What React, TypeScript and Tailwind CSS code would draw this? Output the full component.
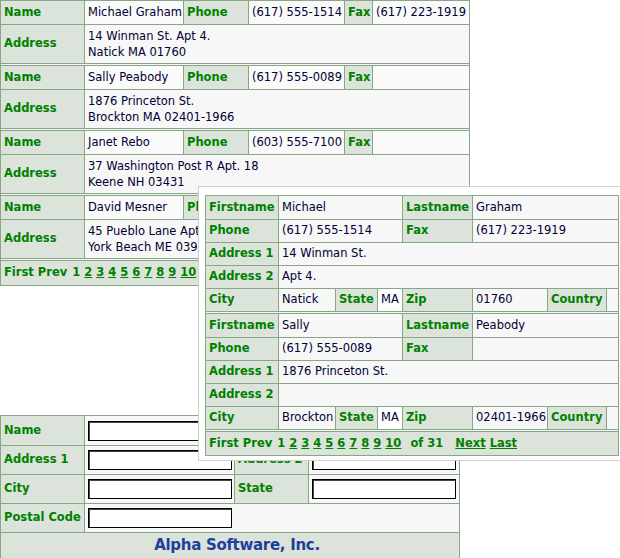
const LBL = 'border border-[#86a886] bg-[#dbe3da] px-[3px] font-bold text-[#008000] whitespace-nowrap';
const VAL = 'border border-[#86a886] bg-[#f7f7f7] px-[3px] text-[#000033] whitespace-nowrap';

const PEOPLE = [
  { name: 'Michael Graham', phone: '(617) 555-1514', fax: '(617) 223-1919', a1: '14 Winman St. Apt 4.', a2: 'Natick MA 01760' },
  { name: 'Sally Peabody', phone: '(617) 555-0089', fax: '', a1: '1876 Princeton St.', a2: 'Brockton MA 02401-1966' },
  { name: 'Janet Rebo', phone: '(603) 555-7100', fax: '', a1: '37 Washington Post R Apt. 18', a2: 'Keene NH 03431' },
  { name: 'David Mesner', phone: '(207) 555-3321', fax: '', a1: '45 Pueblo Lane Apt. 2', a2: 'York Beach ME 03910' },
];

const DETAIL = [
  { first: 'Michael', last: 'Graham', phone: '(617) 555-1514', fax: '(617) 223-1919', a1: '14 Winman St.', a2: 'Apt 4.', city: 'Natick', state: 'MA', zip: '01760' },
  { first: 'Sally', last: 'Peabody', phone: '(617) 555-0089', fax: '', a1: '1876 Princeton St.', a2: '', city: 'Brockton', state: 'MA', zip: '02401-1966' },
];

function Pager({ more }: { more?: boolean }) {
  return (
    <div className="flex items-center font-bold text-[#008000] whitespace-nowrap">
      <span className="mr-[4px]">First</span>
      <span className="mr-[5px]">Prev</span>
      <span className="mr-[4px]">1</span>
      {[2, 3, 4, 5, 6, 7, 8, 9, 10].map((n) => (
        <span key={n} className="mr-[4px] underline">{n}</span>
      ))}
      {more && (
        <>
          <span className="ml-[5px] mr-[12px]">of 31</span>
          <span className="mr-[4px] underline">Next</span>
          <span className="underline">Last</span>
        </>
      )}
    </div>
  );
}

function ListTable() {
  return (
    <table className="w-[469px] table-fixed border-collapse bg-[#f4f4f4]">
      <colgroup>
        <col className="w-[84px]" />
        <col className="w-[99px]" />
        <col className="w-[65px]" />
        <col className="w-[96px]" />
        <col className="w-[28px]" />
        <col className="w-[97px]" />
      </colgroup>
      <tbody>
        {PEOPLE.map((p, i) => (
          <>
            {i > 0 && (
              <tr key={'s' + i} className="h-[2px]">
                <td colSpan={6} className="p-0 border-x border-[#86a886]" />
              </tr>
            )}
            <tr key={'n' + i} className="h-[24px]">
              <td className={LBL}>Name</td>
              <td className={VAL + ' bg-[#fafafa]'}>{p.name}</td>
              <td className={LBL}>Phone</td>
              <td className={VAL + ' bg-[#fafafa]'}>{p.phone}</td>
              <td className={LBL + ' px-[2px]'}>Fax</td>
              <td className={VAL + ' bg-[#fafafa]'}>{p.fax}</td>
            </tr>
            <tr key={'a' + i} className="h-[39px]">
              <td className={LBL}>Address</td>
              <td colSpan={5} className={VAL + ' leading-[16px]'}>
                {p.a1}
                <br />
                {p.a2}
              </td>
            </tr>
          </>
        ))}
        <tr className="h-[2px]">
          <td colSpan={6} className="p-0 border-x border-[#86a886]" />
        </tr>
        <tr className="h-[25px]">
          <td colSpan={6} className="border border-[#86a886] bg-[#dbe3da] px-[3px]">
            <Pager />
          </td>
        </tr>
      </tbody>
    </table>
  );
}

function DetailPanel() {
  return (
    <div className="absolute left-[198px] top-[186px] w-[430px] h-[275px] bg-white border border-[#cfcfcf] pl-[6px] pt-[8px]">
      <table className="w-[413px] table-fixed border-collapse bg-[#f4f4f4]">
        <colgroup>
          <col className="w-[73px]" />
          <col className="w-[57px]" />
          <col className="w-[42px]" />
          <col className="w-[25px]" />
          <col className="w-[70px]" />
          <col className="w-[75px]" />
          <col className="w-[59px]" />
          <col className="w-[12px]" />
        </colgroup>
        <tbody>
          {DETAIL.map((d, i) => (
            <>
              {i > 0 && (
                <tr key={'s' + i} className="h-[2px]">
                  <td colSpan={8} className="p-0 border-x border-[#86a886]" />
                </tr>
              )}
              <tr key={'f' + i} className="h-[24px]">
                <td className={LBL}>Firstname</td>
                <td colSpan={3} className={VAL}>{d.first}</td>
                <td className={LBL}>Lastname</td>
                <td colSpan={3} className={VAL}>{d.last}</td>
              </tr>
              <tr key={'p' + i} className="h-[23px]">
                <td className={LBL}>Phone</td>
                <td colSpan={3} className={VAL}>{d.phone}</td>
                <td className={LBL}>Fax</td>
                <td colSpan={3} className={VAL}>{d.fax}</td>
              </tr>
              <tr key={'a' + i} className="h-[23px]">
                <td className={LBL}>Address 1</td>
                <td colSpan={7} className={VAL}>{d.a1}</td>
              </tr>
              <tr key={'b' + i} className="h-[23px]">
                <td className={LBL}>Address 2</td>
                <td colSpan={7} className={VAL}>{d.a2}</td>
              </tr>
              <tr key={'c' + i} className="h-[23px]">
                <td className={LBL}>City</td>
                <td className={VAL}>{d.city}</td>
                <td className={LBL}>State</td>
                <td className={VAL + ' bg-white px-[2px]'}>{d.state}</td>
                <td className={LBL}>Zip</td>
                <td className={VAL}>{d.zip}</td>
                <td className={LBL + ' px-[2px]'}>Country</td>
                <td className={VAL} />
              </tr>
            </>
          ))}
          <tr className="h-[2px]">
            <td colSpan={8} className="p-0 border-x border-[#86a886]" />
          </tr>
          <tr className="h-[24px]">
            <td colSpan={8} className="border border-[#86a886] bg-[#dbe3da] px-[3px]">
              <Pager more />
            </td>
          </tr>
        </tbody>
      </table>
    </div>
  );
}

function Field() {
  return <input className="block w-[144px] h-[20px] border border-black bg-white shadow-[inset_1px_1px_0_#444]" />;
}

function EntryForm() {
  return (
    <table className="mt-[129px] w-[459px] table-fixed border-collapse bg-[#f4f4f4]">
      <colgroup>
        <col className="w-[84px]" />
        <col className="w-[150px]" />
        <col className="w-[74px]" />
        <col className="w-[151px]" />
      </colgroup>
      <tbody>
        <tr className="h-[30px]">
          <td className={LBL}>Name</td>
          <td className={VAL}><Field /></td>
          <td className={LBL}>Company</td>
          <td className={VAL}><Field /></td>
        </tr>
        <tr className="h-[29px]">
          <td className={LBL}>Address 1</td>
          <td className={VAL}><Field /></td>
          <td className={LBL}>Address 2</td>
          <td className={VAL}><Field /></td>
        </tr>
        <tr className="h-[29px]">
          <td className={LBL}>City</td>
          <td className={VAL}><Field /></td>
          <td className={LBL}>State</td>
          <td className={VAL}><Field /></td>
        </tr>
        <tr className="h-[29px]">
          <td className={LBL}>Postal Code</td>
          <td colSpan={3} className={VAL}><Field /></td>
        </tr>
        <tr className="h-[26px]">
          <td colSpan={4} className="border border-[#86a886] bg-[#dbe3da] pl-[14px] text-center">
            <span className="text-[15px] font-bold tracking-[-0.3px] text-[#1f3f9c]">Alpha Software, Inc.</span>
          </td>
        </tr>
      </tbody>
    </table>
  );
}

export default function App() {
  return (
    <div className="relative w-[620px] h-[558px] overflow-hidden bg-white font-['DejaVu_Sans',sans-serif] text-[11.5px]">
      <ListTable />
      <EntryForm />
      <DetailPanel />
    </div>
  );
}
